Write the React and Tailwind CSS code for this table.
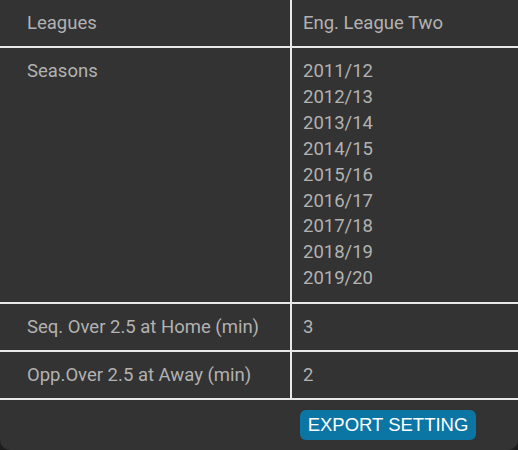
import React from 'react';

const seasons = ['2011/12', '2012/13', '2013/14', '2014/15', '2015/16', '2016/17', '2017/18', '2018/19', '2019/20'];

const rows = [
  { label: 'Leagues', value: ['Eng. League Two'] },
  { label: 'Seasons', value: seasons, tall: true },
  { label: 'Seq. Over 2.5 at Home (min)', value: ['3'] },
  { label: 'Opp.Over 2.5 at Away (min)', value: ['2'] },
];

export default function App() {
  return (
    <div className="min-h-screen bg-[#1d1d1d]">
      <div className="h-[450px] bg-[#333333] rounded-b-[10px] text-[#b2b2b2] text-[18.5px]" style={{ fontFamily: "Roboto, 'Noto Sans', sans-serif" }}>
        {/* Settings table */}
        <div className="grid grid-cols-[290px_1fr] gap-[2px] bg-[#e8e8e8] border-b-2 border-[#e8e8e8]">
          {rows.map(r => (
            <React.Fragment key={r.label}>
              <div className={`bg-[#333333] pl-[27px] pt-[10px] leading-[26px] ${r.tall ? 'pb-[12px]' : 'pb-[10px]'}`}>
                {r.label}
              </div>
              <div className={`bg-[#333333] pl-[11px] pt-[11px] leading-[25.9px] ${r.tall ? 'pb-[10px]' : 'pb-[9px]'}`}>
                {r.value.map(v => (
                  <div key={v}>{v}</div>
                ))}
              </div>
            </React.Fragment>
          ))}
        </div>

        {/* Footer */}
        <div className="grid grid-cols-[292px_1fr] pt-[10px]">
          <div />
          <div>
            <button className="ml-[8px] h-[30px] w-[176px] rounded-[6px] bg-[#0b75a4] text-white text-[18.5px] leading-[30px] text-center" style={{ fontFamily: "'Liberation Sans', Arial, sans-serif" }}>
              EXPORT SETTING
            </button>
          </div>
        </div>
      </div>
    </div>
  );
}
